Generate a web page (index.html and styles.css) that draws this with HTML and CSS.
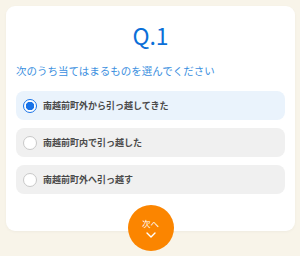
FILE: index.html
```html
<!DOCTYPE html>
<html lang="ja">
<head>
    <meta charset="UTF-8">
    <title>Q.1</title>
    <link rel="stylesheet" href="styles.css">
</head>
<body>
<div class="card">
    <!-- 設問番号 -->
    <h1 class="q-num">Q.1</h1>
    <p class="q-text">次のうち当てはまるものを選んでください</p>
    <!-- 選択肢 -->
    <ul class="choices">
        <li class="choice checked">
            <span class="radio"></span>
            <span class="label">南越前町外から引っ越してきた</span>
        </li>
        <li class="choice">
            <span class="radio"></span>
            <span class="label">南越前町内で引っ越した</span>
        </li>
        <li class="choice">
            <span class="radio"></span>
            <span class="label">南越前町外へ引っ越す</span>
        </li>
    </ul>
</div>
<a href="javascript:;" class="next">
    <span>次へ</span>
    <svg width="10" height="6" viewBox="0 0 10 6"><path d="M1 1 L5 5 L9 1" fill="none" stroke="#fff" stroke-width="1.4" stroke-linecap="round" stroke-linejoin="round"/></svg>
</a>
</body>
</html>
```

FILE: styles.css
```css
* {
    padding: 0;
    margin: 0;
    box-sizing: border-box;
}

ul {
    list-style: none;
}

a {
    text-decoration: none;
}

body {
    background-color: #f8f4e9;
    padding: 6px 5px 0 6px;
    font-family: "Noto Sans CJK JP", "Noto Sans", sans-serif;
}

.card {
    background-color: #fff;
    border-radius: 9px;
    padding: 14px 10px 37px;
    box-shadow: 0 1px 3px rgba(0, 0, 0, .04);
}

.q-num {
    text-align: center;
    font-size: 23px;
    font-weight: 400;
    line-height: 30px;
    color: #0b6fd8;
}

.q-text {
    margin-top: 13px;
    font-size: 10.5px;
    line-height: 16px;
    color: #3b8fe0;
}

.choices {
    margin-top: 12px;
    display: flex;
    flex-direction: column;
    gap: 8px;
}

.choice {
    display: flex;
    align-items: center;
    height: 29px;
    padding-left: 7px;
    border-radius: 8px;
    background-color: #f0f0f0;
}

.choice.checked {
    background-color: #eaf3fc;
}

.radio {
    width: 14px;
    height: 14px;
    border-radius: 50%;
    border: 1px solid #c8c8c8;
    background-color: #fff;
    margin-right: 6px;
    flex-shrink: 0;
}

.checked .radio {
    border: 1.5px solid #1a73e8;
    background: radial-gradient(circle, #1a73e8 0 4px, #fff 4.5px);
}

.label {
    font-size: 9px;
    font-weight: 700;
    color: #4a4a4a;
}

.next {
    display: flex;
    flex-direction: column;
    align-items: center;
    justify-content: center;
    width: 46px;
    height: 46px;
    margin: -26px auto 0;
    border-radius: 50%;
    background-color: #fb8500;
    color: #fff;
    font-size: 8.5px;
    line-height: 11px;
    position: relative;
}

.next svg {
    margin-top: 3px;
}
```
